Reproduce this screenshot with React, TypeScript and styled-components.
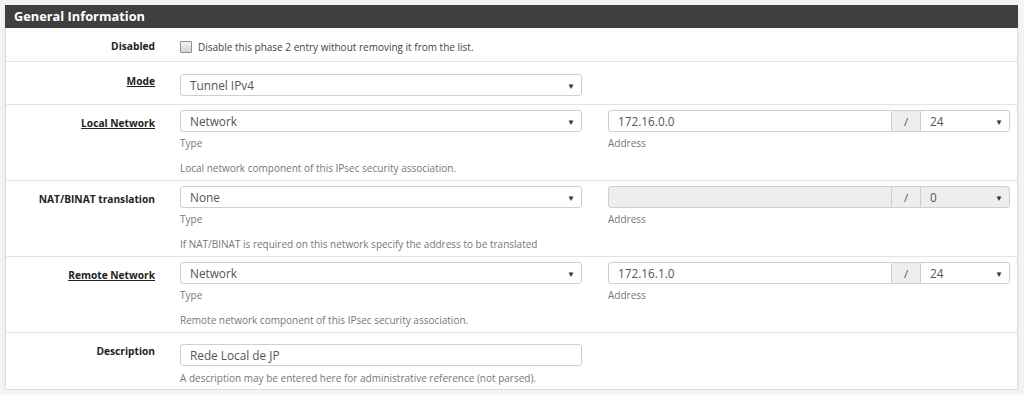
import React from 'react'
import styled, { createGlobalStyle } from 'styled-components'

const GlobalStyle = createGlobalStyle`
  body {
    margin: 0;
    background: #f4f4f4;
    font-family: "Open Sans", "Liberation Sans", sans-serif;
  }
`

const Panel = styled.div`
  box-sizing: border-box;
  width: 1013px;
  margin: 5px 0 0 5px;
  background: #fff;
  border: 1px solid #dcdcdc;
  border-top: none;
  box-shadow: 0 2px 3px rgba(0, 0, 0, 0.08);
`

const Heading = styled.div`
  height: 23px;
  margin: 0 -1px;
  padding: 0 9px;
  background: #3f3f3f;
  color: #fff;
  font-size: 12.8px;
  font-weight: 700;
  line-height: 23px;
`

const Row = styled.div<{ $top: number; $bottom: number; $last?: boolean }>`
  display: grid;
  grid-template-columns: 174px 402px 428px;
  padding: ${({ $top }) => $top}px 0 ${({ $bottom }) => $bottom}px;
  border-bottom: ${({ $last }) => ($last ? 'none' : '1px solid #e4e4e4')};
`

const Label = styled.div<{ $offset: number; $link?: boolean }>`
  padding: ${({ $offset }) => $offset}px 25px 0 0;
  text-align: right;
  font-size: 10.2px;
  font-weight: 700;
  line-height: 15px;
  color: #222;
  text-decoration: ${({ $link }) => ($link ? 'underline' : 'none')};
`

const Cell = styled.div<{ $indent?: number }>`
  display: flex;
  flex-direction: column;
  min-width: 0;
  padding-left: ${({ $indent }) => $indent ?? 0}px;
`

const Select = styled.div<{ $disabled?: boolean; $flat?: 'left' | 'right' }>`
  box-sizing: border-box;
  display: flex;
  align-items: center;
  justify-content: space-between;
  height: 22px;
  padding: 0 6px 0 9px;
  border: 1px solid #cfcfcf;
  border-radius: 3px;
  background: ${({ $disabled }) => ($disabled ? '#eeeeee' : '#fff')};
  color: #555;
  font-size: 11.8px;
  ${({ $flat }) => ($flat === 'left' ? 'border-top-left-radius: 0; border-bottom-left-radius: 0;' : '')}
  ${({ $flat }) => ($flat === 'right' ? 'border-top-right-radius: 0; border-bottom-right-radius: 0;' : '')}
`

const Arrow = styled.span`
  font-size: 8px;
  color: #333;
`

const TextInput = styled(Select)`
  justify-content: flex-start;
`

const Group = styled.div`
  display: grid;
  grid-template-columns: 1fr 28px 90px;
`

const Addon = styled.div`
  box-sizing: border-box;
  height: 22px;
  display: flex;
  align-items: center;
  justify-content: center;
  background: #eeeeee;
  border-top: 1px solid #cfcfcf;
  border-bottom: 1px solid #cfcfcf;
  color: #555;
  font-size: 11.5px;
`

const Sub = styled.div<{ $gap: number }>`
  margin-top: ${({ $gap }) => $gap}px;
  font-size: 10px;
  line-height: 15px;
  color: #777;
  white-space: nowrap;
`

const Check = styled.label`
  display: flex;
  align-items: center;
  gap: 6px;
  height: 15px;
  font-size: 10px;
  color: #444;
  white-space: nowrap;
`

const Box = styled.span`
  box-sizing: border-box;
  width: 12px;
  height: 12px;
  border: 1px solid #8e8e8e;
  border-radius: 1px;
  background: linear-gradient(#f2f2f2, #d6d6d6);
`

type DropProps = { value: string; disabled?: boolean; flat?: 'left' | 'right' }

const Drop: React.FC<DropProps> = ({ value, disabled, flat }) => (
  <Select $disabled={disabled} $flat={flat}>
    <span>{value}</span>
    <Arrow>▼</Arrow>
  </Select>
)

type NetProps = {
  label: string
  link?: boolean
  type: string
  address: string
  mask: string
  help: string
  disabled?: boolean
}

const NetworkRow: React.FC<NetProps> = ({ label, link, type, address, mask, help, disabled }) => (
  <Row $top={5} $bottom={4}>
    <Label $offset={6} $link={link}>{label}</Label>
    <Cell>
      <Drop value={type} />
      <Sub $gap={4}>Type</Sub>
      <Sub $gap={10}>{help}</Sub>
    </Cell>
    <Cell $indent={26}>
      <Group>
        <TextInput $disabled={disabled} $flat="right">{address}</TextInput>
        <Addon>/</Addon>
        <Drop value={mask} disabled={disabled} flat="left" />
      </Group>
      <Sub $gap={4}>Address</Sub>
    </Cell>
  </Row>
)

export default function App() {
  return (
    <>
      <GlobalStyle />
      <Panel>
        <Heading>General Information</Heading>
        <Row $top={11} $bottom={7}>
          <Label $offset={0}>Disabled</Label>
          <Cell>
            <Check>
              <Box />
              Disable this phase 2 entry without removing it from the list.
            </Check>
          </Cell>
        </Row>
        <Row $top={12} $bottom={8}>
          <Label $offset={0} $link>Mode</Label>
          <Cell>
            <Drop value="Tunnel IPv4" />
          </Cell>
        </Row>
        <NetworkRow
          label="Local Network"
          link
          type="Network"
          address="172.16.0.0"
          mask="24"
          help="Local network component of this IPsec security association."
        />
        <NetworkRow
          label="NAT/BINAT translation"
          type="None"
          address=""
          mask="0"
          disabled
          help="If NAT/BINAT is required on this network specify the address to be translated"
        />
        <NetworkRow
          label="Remote Network"
          link
          type="Network"
          address="172.16.1.0"
          mask="24"
          help="Remote network component of this IPsec security association."
        />
        <Row $top={11} $bottom={3} $last>
          <Label $offset={0}>Description</Label>
          <Cell>
            <TextInput>Rede Local de JP</TextInput>
            <Sub $gap={5}>A description may be entered here for administrative reference (not parsed).</Sub>
          </Cell>
        </Row>
      </Panel>
    </>
  )
}
